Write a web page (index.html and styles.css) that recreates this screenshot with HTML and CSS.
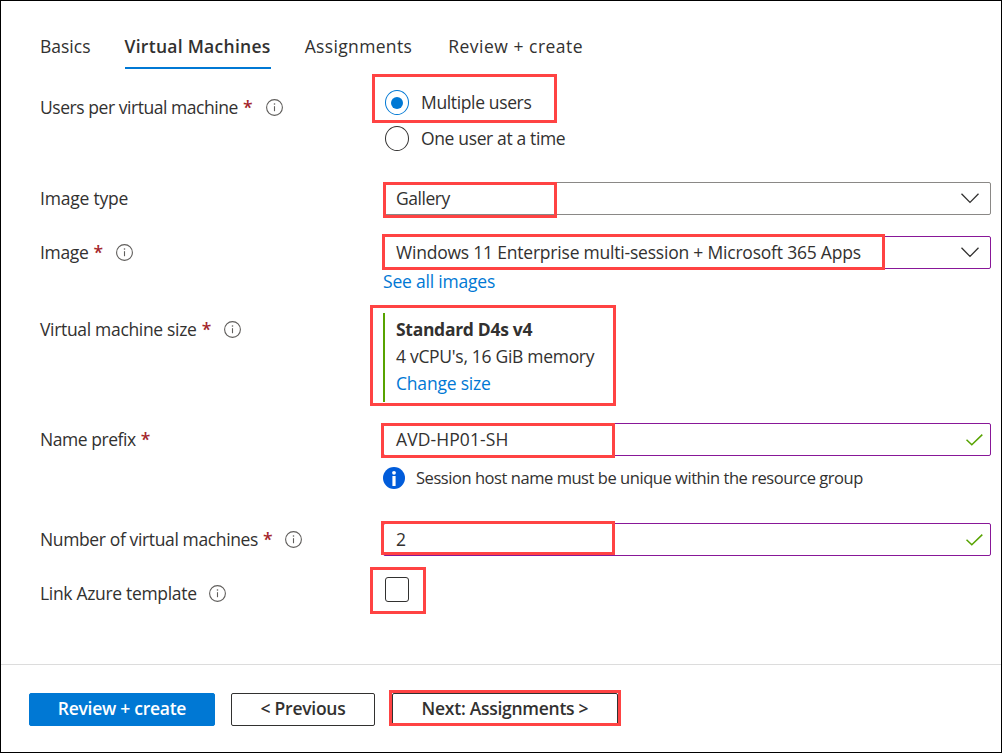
FILE: index.html
```html
<!DOCTYPE html>
<html lang="en">
<head>
<meta charset="utf-8">
<title>Create a host pool</title>
<link rel="stylesheet" href="styles.css">
</head>
<body>
<svg class="defs" width="0" height="0" aria-hidden="true">
  <symbol id="info" viewBox="0 0 17 17">
    <circle cx="8.5" cy="8.5" r="7.9" fill="none" stroke="#605e5c" stroke-width="1.1"/>
    <path d="M8.5 7.2v5" stroke="#605e5c" stroke-width="1.1"/>
    <circle cx="8.5" cy="5" r=".8" fill="#605e5c"/>
  </symbol>
  <symbol id="chevron" viewBox="0 0 18 11">
    <path d="M.5 .8 9 9.4 17.5 .8" fill="none" stroke="#323130" stroke-width="1.3"/>
  </symbol>
  <symbol id="check" viewBox="0 0 17 12">
    <path d="M.5 5.7 5.8 10.8 16.3 .6" fill="none" stroke="#57a300" stroke-width="1.5"/>
  </symbol>
</svg>
<div class="page">
  <nav class="tabs">
    <a class="tab t-basics">Basics</a>
    <a class="tab t-vm active">Virtual Machines</a>
    <a class="tab t-assign">Assignments</a>
    <a class="tab t-review">Review + create</a>
  </nav>
  <main class="form">
    <div class="row users">
      <div class="label"><span class="l-users">Users per virtual machine</span><b class="req">*</b><svg class="info"><use href="#info"/></svg></div>
      <div class="control radios">
        <div class="radio"><i class="dot on"></i><span class="r-multi">Multiple users</span></div>
        <div class="radio"><i class="dot"></i><span class="r-one">One user at a time</span></div>
        <i class="mark m-users"></i>
      </div>
    </div>
    <div class="row type">
      <div class="label"><span class="l-type">Image type</span></div>
      <div class="control">
        <div class="field gray"><span class="v-gallery">Gallery</span><svg class="chevron"><use href="#chevron"/></svg></div>
        <i class="mark m-type"></i>
      </div>
    </div>
    <div class="row image">
      <div class="label"><span class="l-image">Image</span><b class="req">*</b><svg class="info"><use href="#info"/></svg></div>
      <div class="control">
        <div class="field"><span class="v-image">Windows 11 Enterprise multi-session + Microsoft 365 Apps</span><svg class="chevron"><use href="#chevron"/></svg></div>
        <a class="link see"><span class="v-see">See all images</span></a>
        <i class="mark m-image"></i>
      </div>
    </div>
    <div class="row size">
      <div class="label"><span class="l-size">Virtual machine size</span><b class="req">*</b><svg class="info"><use href="#info"/></svg></div>
      <div class="control">
        <div class="card">
          <strong><span class="v-std">Standard D4s v4</span></strong>
          <div><span class="v-cpu">4 vCPU's, 16 GiB memory</span></div>
          <a class="link"><span class="v-change">Change size</span></a>
        </div>
        <i class="mark m-size"></i>
      </div>
    </div>
    <div class="row prefix">
      <div class="label"><span class="l-prefix">Name prefix</span><b class="req">*</b></div>
      <div class="control">
        <div class="field"><span class="v-prefix">AVD-HP01-SH</span><svg class="check"><use href="#check"/></svg></div>
        <div class="note">
          <svg class="badge" viewBox="0 0 22 22"><circle cx="11" cy="11" r="11" fill="#015cda"/><circle cx="11" cy="5.8" r="1.9" fill="#fff"/><path d="M11 9v10" stroke="#fff" stroke-width="3.2"/></svg>
          <span class="v-note">Session host name must be unique within the resource group</span>
        </div>
        <i class="mark m-prefix"></i>
      </div>
    </div>
    <div class="row number">
      <div class="label"><span class="l-number">Number of virtual machines</span><b class="req">*</b><svg class="info"><use href="#info"/></svg></div>
      <div class="control">
        <div class="field"><span>2</span><svg class="check"><use href="#check"/></svg></div>
        <i class="mark m-number"></i>
      </div>
    </div>
    <div class="row template">
      <div class="label"><span class="l-template">Link Azure template</span><svg class="info"><use href="#info"/></svg></div>
      <div class="control">
        <i class="checkbox"></i>
        <i class="mark m-template"></i>
      </div>
    </div>
  </main>
  <footer class="footer">
    <button class="btn primary"><span class="b-review">Review + create</span></button>
    <button class="btn prev"><span class="b-prev">&lt; Previous</span></button>
    <div class="next-wrap"><button class="btn next"><span class="b-next">Next: Assignments &gt;</span></button><i class="mark m-next"></i></div>
  </footer>
</div>
</body>
</html>
```
FILE: styles.css
```css
* { box-sizing: border-box; }
body { margin: 0; background: #fff; }
.defs { position: absolute; }
.page {
  width: 1002px; height: 753px; border: 1px solid #000; overflow: hidden;
  display: flex; flex-direction: column;
  font: 400 17.5px/27px "Open Sans", "Noto Sans", sans-serif; color: #323130;
}
.page span, .tab { white-space: nowrap; }
.tabs { display: flex; padding: 32px 0 0 39px; height: 69px; flex: none; }
.tab { height: 36px; }
.tab + .tab { margin-left: 34px; }
.tab.active { font-weight: 600; border-bottom: 2px solid #0078d4; letter-spacing: .28px; }
.t-assign { letter-spacing: .35px; }
.tabs .t-review { letter-spacing: .5px; margin-left: 36px; }
.form { height: 594px; flex: none; padding: 20px 10px 0 39px; }
.row { display: grid; grid-template-columns: 343px 1fr; align-items: start; }
.label { display: flex; align-items: center; height: 33px; letter-spacing: -.32px; }
.users .label { height: 35px; }
.req { color: #a4262c; margin-left: 5px; font-weight: 600; }
.info { width: 17px; height: 17px; margin-left: 13px; }
.users .info { margin-left: 14px; }
.control { position: relative; letter-spacing: -.3px; }
.radios { display: flex; flex-direction: column; gap: 11px; padding-left: 2px; letter-spacing: -.36px; }
.radio { display: flex; align-items: center; gap: 12px; height: 25px; }
.dot { width: 24px; height: 25px; border: 1px solid #323130; border-radius: 50%; display: grid; place-items: center; }
.dot.on { border-color: #0078d4; }
.dot.on::after { content: ""; width: 12px; height: 12px; border-radius: 50%; background: #0078d4; }
.type { margin-top: 31px; }
.image { margin-top: 21px; }
.size { margin-top: 18px; }
.prefix { margin-top: 21px; }
.number { margin-top: 34px; }
.template { margin-top: 21px; }
.template .info { margin-left: 12px; }
.l-users { letter-spacing: -.45px; }
.l-type { letter-spacing: -.2px; }
.l-prefix { letter-spacing: -.45px; }
.l-number { letter-spacing: -.37px; }
.v-gallery { letter-spacing: -.45px; }
.v-image { letter-spacing: -.21px; }
.v-see, .v-change { letter-spacing: -.2px; }
.v-prefix { letter-spacing: .1px; }
.v-note { font-size: 16.5px; letter-spacing: -.45px; margin-top: -2px; }
.field { display: flex; align-items: center; justify-content: space-between; height: 33px; padding: 0 11px 0 12px; border: 1px solid #881798; border-radius: 2px; }
.field.gray { border-color: #8a8886; }
.chevron { width: 18px; height: 11px; }
.check { width: 17px; height: 12px; margin-right: -4px; }
.link { color: #0078d4; display: block; }
.see { height: 26px; line-height: 25px; }
.card { border-left: 2px solid #57a300; padding: 3px 0 5px 11px; height: 89px; }
.card strong { display: block; font-weight: 700; }
.note { display: flex; align-items: center; gap: 11px; height: 22px; margin-top: 11px; }
.badge { width: 22px; height: 22px; }
.checkbox { display: block; width: 24px; height: 25px; margin-left: 2px; border: 1px solid #323130; border-radius: 3px; }
.footer { flex: 1; border-top: 1px solid #dcdcdc; padding: 28px 0 0 28px; display: flex; align-items: flex-start; }
.btn { display: block; height: 33px; padding: 0 0 2px; border: 1px solid #323130; border-radius: 2px; background: #fff; color: #323130; font: 600 17.5px/27px "Open Sans", "Noto Sans", sans-serif; letter-spacing: -.27px; }
.primary { width: 186px; background: #0078d4; border-color: #0078d4; color: #fff; }
.prev { width: 144px; margin-left: 16px; }
.next-wrap { position: relative; margin-left: 17px; }
.next { width: 226px; }

/* red highlight boxes laid over the controls */
.mark { position: absolute; border: 3px solid #ff4343; }
.m-users { left: -11px; top: -16px; width: 185px; height: 49px; }
.m-type { left: 0; top: 0; width: 174px; height: 36px; }
.m-image { left: -1px; top: -2px; width: 503px; height: 36px; }
.m-size { left: -13px; top: -8px; width: 246px; height: 101px; }
.m-prefix { left: -2px; top: 0; width: 234px; height: 35px; }
.m-number { left: -2px; top: -2px; width: 234px; height: 34px; }
.m-template { left: -13px; top: -10px; width: 56px; height: 47px; }
.m-next { left: -3px; top: -3px; width: 232px; height: 36px; }
```
